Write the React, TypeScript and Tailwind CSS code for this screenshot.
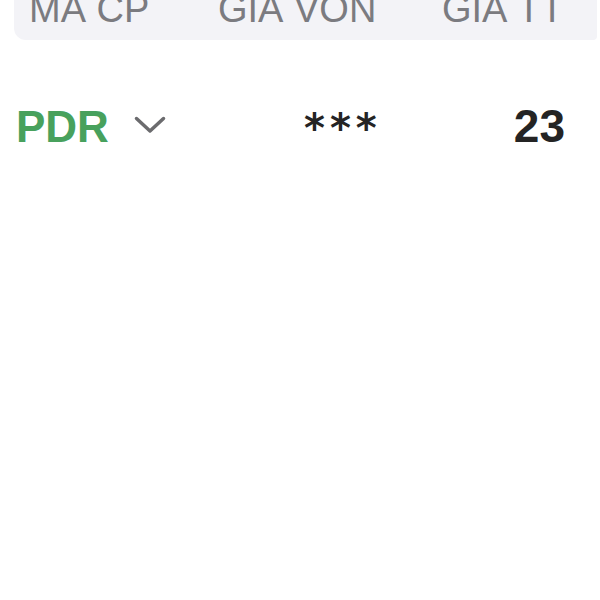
import React from 'react';

const columns = ['MÃ CP', 'GIÁ VỐN', 'GIÁ TT'];

export default function App() {
  return (
    <div
      className="w-[600px] h-[600px] bg-white overflow-hidden"
      style={{ fontFamily: '"Liberation Sans", Arial, sans-serif' }}
    >
      {/* Table header (top is scrolled off) */}
      <div className="ml-[14px] mr-[3px] h-[40px] bg-[#f3f3f7] rounded-bl-[12px] rounded-br-[4px] overflow-hidden">
        <div className="grid grid-cols-[189px_224px_1fr] pl-[15px] -mt-[10px] text-[38px] leading-none text-[#7b7b80]">
          {columns.map((c) => (
            <span key={c} className="whitespace-nowrap">{c}</span>
          ))}
        </div>
      </div>

      {/* Row */}
      <div className="flex items-baseline mt-[63px] pl-[16px] pr-[35px] leading-none">
        <div className="w-[288px] flex items-baseline">
          <span className="text-[44px] font-bold text-[#48a15d]">PDR</span>
          <svg
            className="ml-[25px] self-center -mt-[4px]"
            width="32"
            height="18"
            viewBox="0 0 32 18"
            fill="none"
            stroke="#6b6b6e"
            strokeWidth="3.5"
            strokeLinecap="round"
            strokeLinejoin="round"
          >
            <polyline points="2.5,2.5 16,15 29.5,2.5" />
          </svg>
        </div>
        <span
          className="text-[40px] font-bold text-[#242424] tracking-[5px]"
          style={{ fontFamily: '"DejaVu Sans", sans-serif' }}
        >
          ***
        </span>
        <span className="ml-auto text-[46px] font-bold text-[#242424]">23</span>
      </div>
    </div>
  );
}
